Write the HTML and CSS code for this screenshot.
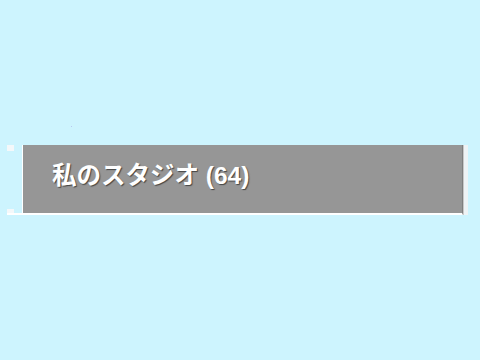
FILE: index.html
```html
<!DOCTYPE html>
<html lang="ja">
<head>
  <meta charset="UTF-8" />
  <title>私のスタジオ</title>
  <link rel="stylesheet" href="styles.css">
</head>
<body>
  <span class="dot"></span>
  <div class="studio-row">
    <div class="bracket">
      <span class="tip tip-top"></span>
      <span class="tip tip-bottom"></span>
    </div>
    <div class="studio-bar">
      <h2 class="studio-title">私のスタジオ (64)</h2>
    </div>
    <div class="bar-edge"></div>
  </div>
</body>
</html>
```

FILE: styles.css
```css
body {
  background: #cdf4fe;
  margin: 0;
  padding: 0;
  height: 360px;
  overflow: hidden;
  font-family: "Liberation Sans", "Noto Sans CJK JP", sans-serif;
}
.dot {
  position: absolute;
  left: 71px;
  top: 126px;
  width: 1px;
  height: 1px;
  background: #b8c8f0;
}
.studio-row {
  display: flex;
  margin: 145px 0 0 7px;
  height: 70px;
}
.bracket {
  position: relative;
  width: 16px;
  border-right: 1px solid #fff;
  border-bottom: 2px solid #fff;
  box-sizing: border-box;
}
.tip {
  position: absolute;
  left: 0;
  width: 7px;
  background: #f4f8fa;
}
.tip-top {
  top: 0;
  height: 6px;
}
.tip-bottom {
  bottom: 0;
  height: 4px;
}
.studio-bar {
  width: 440px;
  background: #969696;
  border-right: 1px solid #7f7f7f;
  border-bottom: 2px solid #fff;
  box-sizing: border-box;
  display: flex;
  align-items: center;
  padding-left: 29px;
}
.studio-title {
  margin: 0 0 11px 0;
  color: #fff;
  font-size: 24.5px;
  font-weight: bold;
  text-shadow: 1px 1px 1px #444;
}
.bar-edge {
  width: 4px;
  background: #eef3f5;
  border-left: 1px solid #c8c8c8;
}
```
